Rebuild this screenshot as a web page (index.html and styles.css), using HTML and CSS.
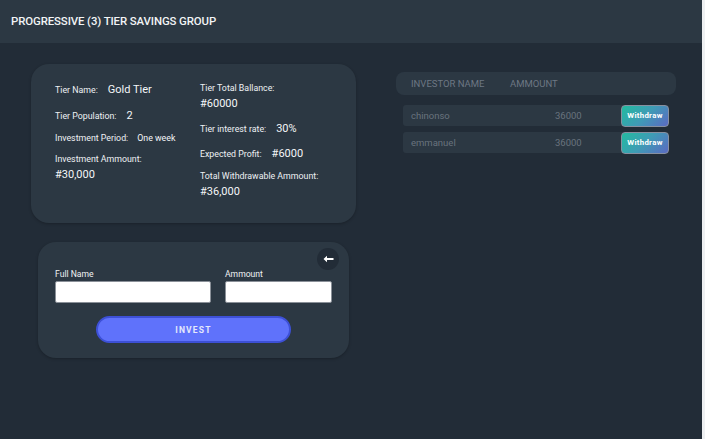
FILE: index.html
```html
<!DOCTYPE html>
<html>
<head>
<meta charset="utf-8">
<link rel="stylesheet" href="styles.css">
</head>
<body>
<div class="app">
  <header class="topbar">PROGRESSIVE (3) TIER SAVINGS GROUP</header>
  <main class="main">
    <section class="left">
      <div class="info-card">
        <div class="col col-left">
          <div class="item inline"><span class="lbl">Tier Name:</span><span class="val">Gold Tier</span></div>
          <div class="item inline"><span class="lbl">Tier Population:</span><span class="val">2</span></div>
          <div class="item inline"><span class="lbl">Investment Period:</span><span class="val small">One week</span></div>
          <div class="item stack"><span class="lbl">Investment Ammount:</span><span class="val">#30,000</span></div>
        </div>
        <div class="col col-right">
          <div class="item stack"><span class="lbl">Tier Total Ballance:</span><span class="val">#60000</span></div>
          <div class="item inline"><span class="lbl">Tier interest rate:</span><span class="val">30%</span></div>
          <div class="item inline"><span class="lbl">Expected Profit:</span><span class="val">#6000</span></div>
          <div class="item stack"><span class="lbl">Total Withdrawable Ammount:</span><span class="val">#36,000</span></div>
        </div>
      </div>
      <div class="form-card">
        <div class="form-top">
          <button class="back" aria-label="back">
            <svg width="11" height="8" viewBox="0 0 11 8"><path d="M0.5 4 L4 0.8 L4 3 L10.5 3 L10.5 5 L4 5 L4 7.2 Z" fill="#fff"/></svg>
          </button>
        </div>
        <div class="fields">
          <label class="field wide"><span class="flbl">Full Name</span><input type="text"></label>
          <label class="field narrow"><span class="flbl">Ammount</span><input type="text"></label>
        </div>
        <div class="btn-row"><button class="invest">INVEST</button></div>
      </div>
    </section>
    <section class="right">
      <div class="thead"><span class="th-name">INVESTOR NAME</span><span>AMMOUNT</span></div>
      <div class="rows">
        <div class="row"><span class="r-name">chinonso</span><span class="r-amt">36000</span><button class="withdraw">Withdraw</button></div>
        <div class="row"><span class="r-name">emmanuel</span><span class="r-amt">36000</span><button class="withdraw">Withdraw</button></div>
      </div>
    </section>
  </main>
</div>
</body>
</html>
```
FILE: styles.css
```css
html, body { margin: 0; padding: 0; background: #eef0f2; height: 100%; }
body { font-family: Roboto, "Liberation Sans", sans-serif; }
.app { width: 702px; height: 439px; background: #222c37; overflow: hidden; }
.topbar {
  height: 43px; box-sizing: border-box; padding: 14px 0 0 11px;
  background: #2c3843; color: #f2f4f6; font-size: 11.4px; font-weight: 500;
  letter-spacing: -0.1px;
}
.main { display: flex; padding: 21px 0 0 31px; }
.left { width: 325px; display: flex; flex-direction: column; }
.info-card {
  height: 159px; box-sizing: border-box; background: #2c3843; border-radius: 18px;
  display: flex; padding: 18px 0 0 24px; box-shadow: 0 1px 3px rgba(0,0,0,0.25);
}
.col { display: flex; flex-direction: column; }
.col-left { width: 145px; }
.lbl { font-size: 8.8px; color: #eef1f4; }
.val { font-size: 11px; color: #f4f6f8; }
.val.small { font-size: 8.8px; }
.item.inline { display: flex; align-items: baseline; gap: 10px; }
.item.stack { display: flex; flex-direction: column; gap: 4px; }
.col-left .item:nth-child(1) { margin-top: 1px; }
.col-left .item:nth-child(2) { margin-top: 13px; }
.col-left .item:nth-child(3) { margin-top: 11px; gap: 9px; }
.col-left .item:nth-child(4) { margin-top: 11px; }
.col-right .item:nth-child(1) { margin-top: 1px; }
.col-right .item:nth-child(2) { margin-top: 12px; }
.col-right .item:nth-child(3) { margin-top: 12px; }
.col-right .item:nth-child(4) { margin-top: 11px; }

.form-card {
  margin: 19px 0 0 7px; width: 311px; height: 116px; box-sizing: border-box;
  background: #2c3843; border-radius: 18px; padding: 6px 17px 0 17px;
  box-shadow: 0 1px 3px rgba(0,0,0,0.25);
}
.form-top { display: flex; justify-content: flex-end; margin-right: -7px; }
.back {
  width: 22px; height: 22px; border-radius: 50%; border: none; background: #222c37;
  display: flex; align-items: center; justify-content: center; padding: 0;
}
.fields { display: flex; gap: 14px; margin-top: -1px; }
.field { display: flex; flex-direction: column; }
.flbl { font-size: 8.6px; color: #f0f2f4; margin-bottom: 2px; }
.field input {
  height: 22px; box-sizing: border-box; border: 1px solid #8a9098; border-radius: 2px;
  background: #fff; margin: 0; padding: 0 4px;
}
.field.wide input { width: 156px; }
.field.narrow input { width: 107px; }
.btn-row { margin: 13px 0 0 41px; }
.invest {
  width: 195px; height: 27px; border-radius: 14px; border: 2px solid #3d50d6;
  background: #5f72fb; color: #e4e8fb; font-family: inherit; font-size: 8.5px;
  font-weight: 700; letter-spacing: 1.2px; padding: 0;
}

.right { margin-left: 40px; width: 280px; padding-top: 8px; }
.thead {
  height: 23px; background: #2c3843; border-radius: 8px; display: flex; align-items: center;
  padding-left: 15px; color: #6c7783; font-size: 9.5px; box-sizing: border-box;
}
.th-name { width: 99px; }
.rows { display: flex; flex-direction: column; gap: 6px; margin: 10px 0 0 7px; width: 266px; }
.row {
  height: 21px; background: #2c3843; border-radius: 3px; display: flex; align-items: center;
  padding-left: 8px; color: #69737e; font-size: 9.5px;
}
.r-name { width: 144px; }
.r-amt { width: 66px; }
.withdraw {
  width: 48px; height: 22px; border-radius: 4px; border: 1px solid #8790a0;
  background: linear-gradient(135deg, #22bba0 0%, #3f9bb5 50%, #5b6ac3 100%);
  color: #fff; font-family: inherit; font-size: 7.8px; font-weight: 700; padding: 0;
  letter-spacing: 0.3px;
}
```
